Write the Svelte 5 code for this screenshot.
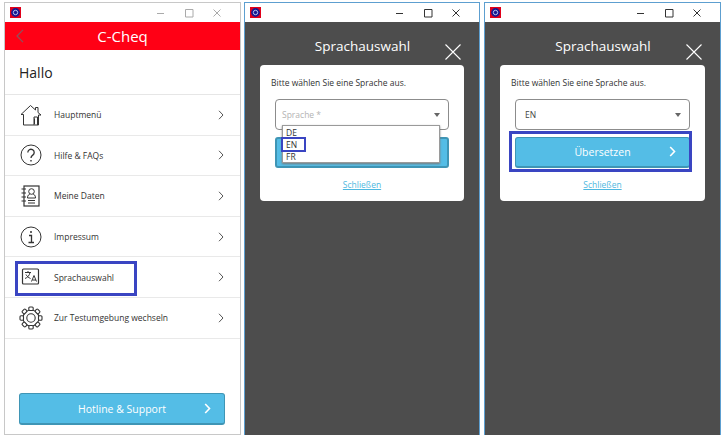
<script>
  const rows = [
    { id: 'home', label: 'Hauptmenü' },
    { id: 'help', label: 'Hilfe & FAQs' },
    { id: 'data', label: 'Meine Daten' },
    { id: 'info', label: 'Impressum' },
    { id: 'lang', label: 'Sprachauswahl' },
    { id: 'gear', label: 'Zur Testumgebung wechseln' }
  ];
  const gearTeeth = [0, 45, 90, 135, 180, 225, 270, 315];
</script>

{#snippet titlebar(dark)}
  <div class="titlebar" class:dark>
    <svg class="logo" width="11" height="11" viewBox="0 0 11 11">
      <rect width="11" height="11" fill="#e0001a" />
      <circle cx="5.5" cy="5.5" r="4.4" fill="#17178f" />
      <circle cx="5.5" cy="5.5" r="2.2" fill="none" stroke="#b9c4ee" stroke-width="1" />
    </svg>
    <svg class="controls" width="90" height="12" viewBox="0 0 90 12">
      <path d="M1 6.5h7M29.5 2.5h7.500v7.500h-7.500zM57.500 2.500l7 7M64.500 2.500l-7 7" fill="none" stroke="currentColor" stroke-width="1" />
    </svg>
  </div>
{/snippet}

{#snippet chevron()}
  <svg class="chev" width="6" height="10" viewBox="0 0 6 10"><path d="M1 .8 5 5 1 9.200" fill="none" stroke="#555" stroke-width="1" /></svg>
{/snippet}

{#snippet btnChevron()}
  <svg class="btn-chev" width="7" height="11" viewBox="0 0 7 11"><path d="M1.200 1 5.500 5.500 1.200 10" fill="none" stroke="#fff" stroke-width="1.600" /></svg>
{/snippet}

{#snippet icon(id)}
  <svg class="icon" width="24" height="24" viewBox="0 0 24 24" fill="none" stroke="#333" stroke-width="1">
    {#if id === 'home'}
      <path d="M2 11.500 11.500 2.500 16.500 7V4.500h2.500V9.500L22 12h-2.500v10h-15V11.500zM15 22v-8h3.500v8M15.500 15.500v5.500" />
    {:else if id === 'help'}
      <circle cx="12" cy="12" r="10" />
      <path d="M8.800 9.500a3.200 3.200 0 1 1 5 2.600c-1.200.8-1.800 1.400-1.800 3" stroke-width="1.300" />
      <path d="M12 17v1.600" stroke-width="1.400" />
    {:else if id === 'data'}
      <rect x="5" y="2" width="15" height="20" stroke-width="1.200" />
      <path d="M2.500 5H7M2.500 9H7M2.500 13H7M2.500 17H7" stroke-width="1.200" />
      <circle cx="12.500" cy="7.500" r="2.800" />
      <path d="M8.500 14c0-3 1.500-3.500 2.500-4M16.500 14c0-3-1.500-3.500-2.500-4M8.500 14h8M9 16.500h7M9 19h7" />
    {:else if id === 'info'}
      <circle cx="12" cy="12" r="10" />
      <path d="M10 10.500h2.500V17M9.500 17.500h5.500" stroke-width="1.300" />
      <circle cx="12" cy="7" r="1" fill="#333" stroke="none" />
    {:else if id === 'lang'}
      <rect x="3.500" y="4" width="16" height="15" rx="1" stroke-width="1.200" />
      <path d="M6 7.500h6M9 6v1.500M11 7.500c-.5 3-2.500 5-5 6M7 9.500c1 2 2.500 3 4.500 4M12.500 16.500l2.500-6 2.500 6M13.500 15h3.500" />
    {:else}
      <circle cx="12" cy="12" r="4.200" stroke-width="1.100" />
      <circle cx="12" cy="12" r="8" stroke-width="1.100" />
      {#each gearTeeth as a}
        <rect x="9.800" y="1" width="4.400" height="3.500" rx="1" fill="#fff" stroke-width="1.100" transform="rotate({a} 12 12)" />
      {/each}
    {/if}
  </svg>
{/snippet}

{#snippet dialog(withDropdown)}
  <div class="dialog-head">
    <span class="dialog-title">Sprachauswahl</span>
    <svg class="dialog-x" width="16" height="16" viewBox="0 0 16 16"><path d="M.5.500l15 15M15.500.500l-15 15" stroke="#fff" stroke-width="1.100" /></svg>
  </div>
  <div class="card">
    <p class="prompt">Bitte wählen Sie eine Sprache aus.</p>
    <div class="select" class:empty={withDropdown}>
      <span>{withDropdown ? 'Sprache *' : 'EN'}</span>
      <i class="caret"></i>
    </div>
    <div class="submit" class:shaded={withDropdown}>
      <span>Übersetzen</span>
      {@render btnChevron()}
    </div>
    <a class="close" href="#top">Schließen</a>
    {#if withDropdown}
      <div class="dropdown">
        <div class="opt">DE</div>
        <div class="opt">EN</div>
        <div class="opt">FR</div>
      </div>
      <div class="mark mark-en"></div>
    {:else}
      <div class="mark mark-submit"></div>
    {/if}
  </div>
{/snippet}

<div class="page">
  <section class="window first">
    {@render titlebar(false)}
    <header class="appbar">
      <svg class="back" width="8" height="14" viewBox="0 0 8 14"><path d="M7 .8 1 7l6 6.200" fill="none" stroke="#8a5560" stroke-width="1.200" /></svg>
      <span>C-Cheq</span>
    </header>
    <h1>Hallo</h1>
    <ul class="menu">
      {#each rows as row}
        <li>
          <span class="icon-wrap">{@render icon(row.id)}</span>
          <span class="label">{row.label}</span>
          {@render chevron()}
          {#if row.id === 'lang'}<div class="mark mark-row"></div>{/if}
        </li>
      {/each}
    </ul>
    <div class="hotline">
      <span>Hotline &amp; Support</span>
      {@render btnChevron()}
    </div>
  </section>

  <section class="window dim second">
    {@render titlebar(true)}
    {@render dialog(true)}
  </section>

  <section class="window dim third">
    {@render titlebar(true)}
    {@render dialog(false)}
  </section>
</div>

<style>
  :global(body) {
    margin: 0;
    background: #fff;
  }
  .page {
    width: 721px;
    height: 435px;
    display: flex;
    box-sizing: border-box;
    padding: 2px 0 0 4px;
    font-family: "Open Sans", "Noto Sans", sans-serif;
    color: #333;
    overflow: hidden;
  }
  .window {
    box-sizing: border-box;
    height: 433px;
    display: flex;
    flex-direction: column;
    background: #fff;
    border: 1px solid #c8c8c8;
  }
  .first {
    width: 237px;
  }
  .dim {
    background: #4d4d4d;
    border-color: #5d9fd0;
    border-bottom: 0;
  }
  .second {
    width: 236px;
    margin-left: 3px;
  }
  .third {
    width: 237px;
    margin-left: 4px;
  }
  .titlebar {
    height: 19px;
    flex: none;
    background: #fff;
    display: flex;
    align-items: center;
    justify-content: space-between;
    padding: 0 0 0 5px;
    color: #aaa;
  }
  .titlebar.dark {
    color: #333;
  }
  .logo {
    margin-top: -1px;
  }
  .controls {
    margin-right: -6px;
    margin-left: auto;
  }
  .appbar {
    height: 28px;
    flex: none;
    background: #ff0015;
    color: #fff;
    display: flex;
    align-items: center;
    justify-content: center;
    font-size: 15px;
    position: relative;
  }
  .back {
    position: absolute;
    left: 11px;
    top: 7px;
  }
  h1 {
    margin: 0;
    height: 44px;
    flex: none;
    box-sizing: border-box;
    padding-left: 14px;
    display: flex;
    align-items: center;
    font-size: 14px;
    font-weight: 400;
    color: #222;
  }
  .menu {
    list-style: none;
    margin: 0;
    padding: 0;
    flex: none;
    border-top: 1px solid #e6e6e6;
  }
  .menu li {
    height: 39.600px;
    border-bottom: 1px solid #e9e9e9;
    display: flex;
    align-items: center;
    position: relative;
  }
  .icon-wrap {
    width: 24px;
    height: 24px;
    margin-left: 14px;
    flex: none;
  }
  .icon {
    display: block;
  }
  .label {
    margin-left: 11px;
    font-size: 8.500px;
    flex: 1;
    color: #333;
  }
  .chev {
    margin-right: 16px;
  }
  .mark {
    position: absolute;
    box-sizing: border-box;
    border: 3px solid #3a45c2;
    pointer-events: none;
  }
  .mark-row {
    left: 10px;
    top: 4px;
    width: 122px;
    height: 35px;
  }
  .hotline,
  .submit {
    box-sizing: border-box;
    background: #54bde6;
    border: 1px solid #3f95b5;
    border-bottom-width: 2px;
    border-radius: 3px;
    color: #fff;
    display: flex;
    align-items: center;
    justify-content: center;
    position: relative;
  }
  .hotline {
    width: 206px;
    height: 32px;
    margin: auto 0 9px 14px;
    font-size: 10.500px;
  }
  .btn-chev {
    position: absolute;
    right: 13px;
    top: 50%;
    margin-top: -6px;
  }
  .dialog-head {
    height: 43px;
    flex: none;
    position: relative;
    display: flex;
    align-items: center;
    justify-content: center;
    color: #fff;
    padding-top: 5px;
    box-sizing: border-box;
  }
  .dialog-title {
    font-size: 13.500px;
    margin-left: 1px;
  }
  .dialog-x {
    position: absolute;
    right: 18px;
    top: 22px;
  }
  .card {
    margin: 0 15px 0 15px;
    height: 136px;
    box-sizing: border-box;
    background: #fff;
    border-radius: 4px;
    padding: 10px 15px 0 11px;
    position: relative;
    display: flex;
    flex-direction: column;
  }
  .prompt {
    margin: 0 0 9px;
    font-size: 8.500px;
    line-height: 15px;
    color: #333;
  }
  .select {
    box-sizing: border-box;
    height: 31px;
    margin-left: 4px;
    border: 1px solid #8c8c8c;
    border-radius: 4px;
    display: flex;
    align-items: center;
    padding: 0 8px 0 9px;
    font-size: 8.500px;
    color: #444;
    justify-content: space-between;
  }
  .select.empty {
    color: #b3b3b3;
    padding-left: 6px;
  }
  .caret {
    width: 0;
    height: 0;
    border: 3px solid transparent;
    border-top: 4px solid #666;
    border-bottom: 0;
  }
  .submit {
    height: 31px;
    margin: 7px 0 0 4px;
    font-size: 10.500px;
  }
  .submit.shaded {
    border-width: 2px;
  }
  .close {
    margin: 11px 0 0 4px;
    font-size: 8.500px;
    line-height: 12px;
    text-align: center;
    color: #4fb8e0;
    text-decoration: underline;
  }
  .dropdown {
    position: absolute;
    left: 22px;
    top: 60px;
    width: 158px;
    height: 38px;
    box-sizing: border-box;
    background: #fff;
    border: 1px solid #9a9a9a;
    box-shadow: 0 1px 2px #7a7a7a;
    padding: 1px 0 0 3px;
  }
  .opt {
    font-size: 8.500px;
    line-height: 12px;
    color: #333;
  }
  .mark-en {
    left: 21px;
    top: 72px;
    width: 25px;
    height: 15px;
    border-width: 2px;
  }
  .mark-submit {
    left: 9px;
    top: 66px;
    width: 183px;
    height: 41px;
  }
</style>
